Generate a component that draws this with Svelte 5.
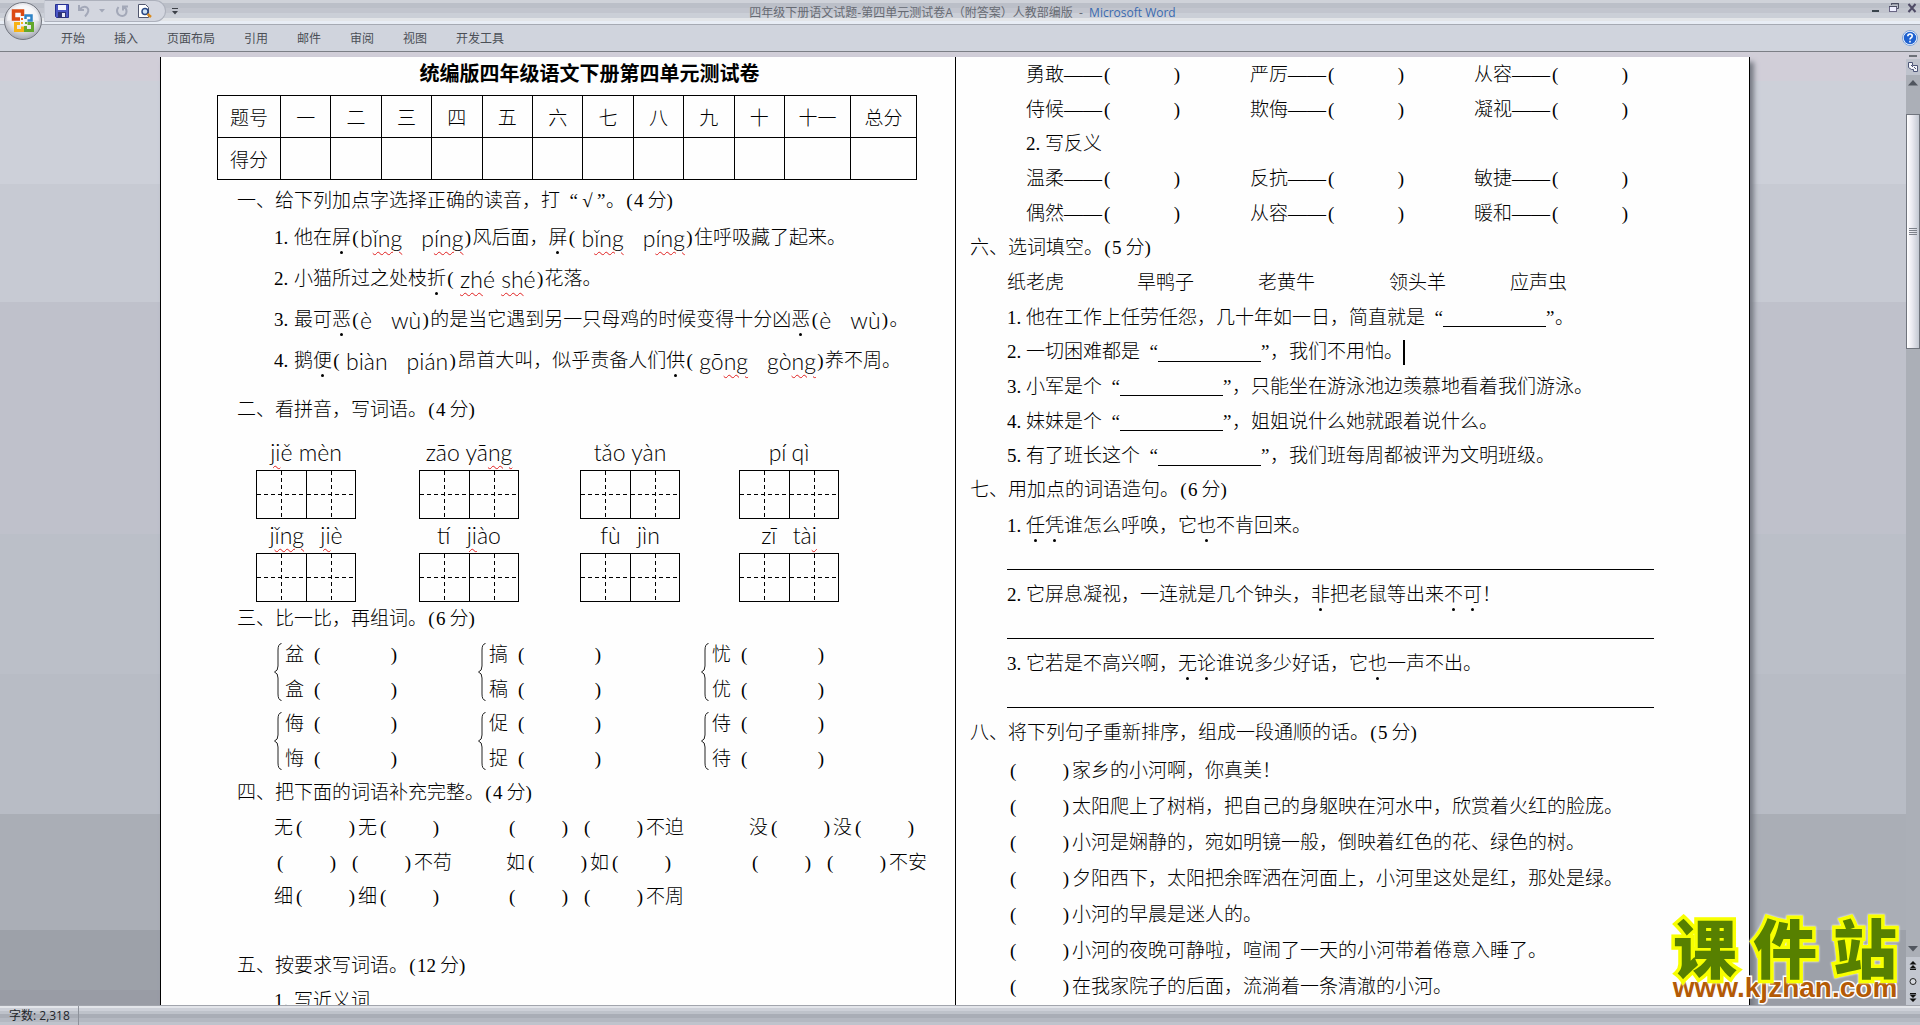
<script>
  const tabs = ['开始', '插入', '页面布局', '引用', '邮件', '审阅', '视图', '开发工具'];
  const numerals = ['一', '二', '三', '四', '五', '六', '七', '八', '九', '十', '十一', '总分'];

  // Markup: {pinyin} with ~misspelt~ parts, *dotted character, _ blank line,
  // [ ] answer bracket, ; wide gap, ' thin gap, | text caret
  const readings = [
    "1.他在*屏({b~ǐng~};{p~íng~})风后面，*屏('{b~ǐng~};{p~íng~})住呼吸藏了起来。",
    "2.小猫所过之处枝*折('{~zh~é ~sh~é})花落。",
    '3.最可*恶({è};{wù})的是当它遇到另一只母鸡的时候变得十分凶*恶({è};{wù})。',
    "4.鹅*便('{biàn};{pián})昂首大叫，似乎责备人们*供('{gō~ng~};{gò~ng~})养不周。"
  ];
  const grids = [
    ['{~ji~ě mèn}', '{zāo yā~ng~}', '{tǎo yàn}', "{pí}'{qì}"],
    ["{j~ǐng~}'{ }'{~ji~è}", "{tí}'{ }'{~ji~ào}", "{fù}'{ }'{jìn}", "{zī}'{ }'{tà~i~}"]
  ];
  const pairs = [
    [['盆', '盒'], ['搞', '稿'], ['忧', '优']],
    [['侮', '悔'], ['促', '捉'], ['侍', '待']]
  ];
  const idioms = [
    ['无[]无[]', '[]\'\'[]不迫', '没[]没[]'],
    ['[]\'\'[]不苟', '如[]如[]', '[]\'\'[]不安'],
    ['细[]细[]', '[]\'\'[]不周', '']
  ];
  const synonyms = [['勇敢', '严厉', '从容'], ['侍候', '欺侮', '凝视']];
  const antonyms = [['温柔', '反抗', '敏捷'], ['偶然', '从容', '暖和']];
  const words = ['纸老虎', '旱鸭子', '老黄牛', '领头羊', '应声虫'];
  const fills = [
    '1.他在工作上任劳任怨，几十年如一日，简直就是“_”。',
    '2.一切困难都是“_”，我们不用怕。|',
    '3.小军是个“_”，只能坐在游泳池边羡慕地看着我们游泳。',
    '4.妹妹是个“_”，姐姐说什么她就跟着说什么。',
    '5.有了班长这个“_”，我们班每周都被评为文明班级。'
  ];
  const sentences = [
    '1.*任*凭谁怎么呼唤，它*也不肯回来。',
    '2.它屏息凝视，一连就是几个钟头，*非把老鼠等出来*不*可！',
    '3.它若是不高兴啊，*无*论谁说多少好话，它*也一声不出。'
  ];
  const order = [
    '家乡的小河啊，你真美！',
    '太阳爬上了树梢，把自己的身躯映在河水中，欣赏着火红的脸庞。',
    '小河是娴静的，宛如明镜一般，倒映着红色的花、绿色的树。',
    '夕阳西下，太阳把余晖洒在河面上，小河里这处是红，那处是绿。',
    '小河的早晨是迷人的。',
    '小河的夜晚可静啦，喧闹了一天的小河带着倦意入睡了。',
    '在我家院子的后面，流淌着一条清澈的小河。'
  ];

  const kinds = { '(': 'paren', ')': 'paren', '“': 'open', '”': 'close' };

  function parse(text) {
    const parts = text.match(/\{[^}]*\}|^\d\.|\*.|\[\]|[()“”_;'|]|[^{*[()“”_;'|]+/g) ?? [];
    return parts.map((p) => {
      if (p[0] === '{') return { kind: 'pinyin', runs: p.slice(1, -1).split('~') };
      if (/^\d\.$/.test(p)) return { kind: 'number', text: p };
      if (p[0] === '*') return { kind: 'dotted', text: p[1] };
      if (p === '[]') return { kind: 'bracket' };
      if (p === '_') return { kind: 'blank' };
      if (p === ';') return { kind: 'wide' };
      if (p === "'") return { kind: 'thin' };
      if (p === '|') return { kind: 'caret' };
      return { kind: kinds[p] ?? 'text', text: p };
    });
  }
</script>

{#snippet rich(text)}
  {#each parse(text) as t}{#if t.kind === 'pinyin'}<span class="pinyin">{#each t.runs as run, i}{#if i % 2}<span class="wavy">{run}</span>{:else}{run}{/if}{/each}</span>{:else if t.kind === 'bracket'}<span class="bracket"><span>(</span><span>)</span></span>{:else if t.kind === 'text'}<span>{t.text}</span>{:else}<span class={t.kind}>{t.text ?? ''}</span>{/if}{/each}
{/snippet}

{#snippet heading(text, points)}
  <h2 class="row heading"><span>{text}</span><span class="paren">(</span><span class="points">{points}</span><span>分</span><span>)</span></h2>
{/snippet}

{#snippet opposites(list)}
  {#each list as line}
    <div class="row opposites">
      {#each line as word}
        <div class="row"><span>{word}——</span><span class="bracket long"><span>(</span><span>)</span></span></div>
      {/each}
    </div>
  {/each}
{/snippet}

<div class="app">
  <header class="titlebar">
    <button class="orb" aria-label="Office 按钮">
      <svg viewBox="0 0 40 40" width="40" height="40">
        <defs>
          <radialGradient id="orb" cx="50%" cy="35%" r="65%">
            <stop offset="0" stop-color="#fff" />
            <stop offset=".6" stop-color="#e4e5ea" />
            <stop offset="1" stop-color="#a3a6b0" />
          </radialGradient>
        </defs>
        <circle cx="20" cy="20" r="18.5" fill="url(#orb)" stroke="#72767f" />
        <path d="M4 20a16 16 0 0 1 32 0q-16-5-32 0z" fill="#fff" opacity=".5" />
        <g fill="none" stroke-width="3.500">
          <path d="M17 18h-6.500v-8h9v5" stroke="#dc4a12" />
          <path d="M22.500 18v-3.500h6v5h-4" stroke="#2f84c6" stroke-width="2.500" />
          <path d="M17 22.500h-4.500v7h7v-4" stroke="#f7b316" stroke-width="3" />
          <path d="M22.500 25v4.500h7v-7h-5" stroke="#63a72c" stroke-width="3" />
        </g>
        <g fill="#e8651b"><rect x="18" y="17" width="2" height="2" /><rect x="18" y="21" width="2" height="2" fill="#f7b316" /><rect x="22" y="21" width="2" height="2" fill="#63a72c" /></g>
      </svg>
    </button>
    <div class="quick">
      <button aria-label="保存">
        <svg viewBox="0 0 14 14" width="14" height="14"><path d="M.5.500h13v13h-12l-1-1z" fill="#4a55c4" stroke="#27318f" /><rect x="3" y="1" width="8" height="5" fill="#f2f4fc" /><rect x="3" y="8" width="8" height="6" fill="#2c3278" /><rect x="7" y="9" width="3" height="4" fill="#e8eaf6" /></svg>
      </button>
      <button aria-label="撤消">
        <svg viewBox="0 0 14 14" width="14" height="14" fill="none" stroke="#a3a8b8" stroke-width="2"><path d="M2 1v5h5M2.500 5.500q4-4 7.500-2 3.500 3-2 9" /></svg>
      </button>
      <button class="tiny" aria-label="撤消列表"><svg viewBox="0 0 6 4" width="6" height="4"><path d="M0 0h6L3 3.500z" fill="#a3a8b8" /></svg></button>
      <button aria-label="重复">
        <svg viewBox="0 0 14 14" width="14" height="14" fill="none" stroke="#a3a8b8" stroke-width="2"><path d="M3.500 3q-3 4 0 7.500 4 3 7 0 2.500-4-1-7.500M8 6.500V2.500h5" /></svg>
      </button>
      <button aria-label="打印预览">
        <svg viewBox="0 0 16 14" width="16" height="14"><path d="M1.500.5h7l3 3v10h-10z" fill="#fff" stroke="#50566e" /><circle cx="8" cy="7.500" r="3" fill="#cfe3f7" stroke="#2c4a86" stroke-width="1.500" /><path d="M10.500 10l3.500 3" stroke="#d98a1e" stroke-width="2.500" /></svg>
      </button>
    </div>
    <button class="customise" aria-label="自定义快速访问工具栏"><svg viewBox="0 0 6 7" width="6" height="7"><path d="M0 0h6v1H0zM0 3h6L3 6.500z" fill="#3d4148" /></svg></button>
    <h1 class="caption">四年级下册语文试题-第四单元测试卷A（附答案）人教部编版&nbsp; -&nbsp; <span>Microsoft Word</span></h1>
    <div class="window">
      <button aria-label="最小化"><svg viewBox="0 0 10 10" width="10" height="10"><path d="M1 7h7v2H1z" fill="#3a444c" /></svg></button>
      <button aria-label="还原"><svg viewBox="0 0 10 10" width="10" height="10"><path d="M2.500 2V.5h7v5H8M2 .8h8" fill="none" stroke="#4c4f63" /><rect x=".5" y="3.500" width="7" height="5" fill="#eef" stroke="#6a6684" /><path d="M0 3.500h8" stroke="#4c4f63" /></svg></button>
      <button aria-label="关闭"><svg viewBox="0 0 10 10" width="10" height="10"><path d="M1.500 1l7 8M8.500 1l-7 8" stroke="#4f4b66" stroke-width="2" /></svg></button>
    </div>
  </header>

  <nav class="tabs">
    {#each tabs as tab}<button>{tab}</button>{/each}
    <button class="help" aria-label="帮助"><svg viewBox="0 0 16 16" width="16" height="16"><circle cx="8" cy="8" r="7" fill="#1f62d0" stroke="#f2f7ff" stroke-width="1.500" /><circle cx="8" cy="8" r="7.500" fill="none" stroke="#5f8ccb" stroke-width=".8" /><path d="M5.800 6.300q0-2.300 2.200-2.300t2.200 2q0 1.200-1.400 2-.8.500-.8 1.500M8 10.800v1.700" fill="none" stroke="#fff" stroke-width="1.600" /></svg></button>
  </nav>

  <main class="workspace">
    <div class="canvas">
      <article class="page">
        <section class="column left">
          <h2 class="title">统编版四年级语文下册第四单元测试卷</h2>
          <table>
            <colgroup><col class="first" />{#each numerals as n}<col class:last={n.length > 1} />{/each}</colgroup>
            <tbody>
              <tr><th>题号</th>{#each numerals as n}<th>{n}</th>{/each}</tr>
              <tr><th>得分</th>{#each numerals as n}<td></td>{/each}</tr>
            </tbody>
          </table>
          <div class="readings">
            <h2 class="row heading"><span>一、给下列加点字选择正确的读音，打</span><span class="open">“</span><span class="tick">√</span><span class="close">”</span><span>。</span><span class="paren">(</span><span class="points">4</span><span>分</span><span>)</span></h2>
            {#each readings as line}<div class="row item">{@render rich(line)}</div>{/each}
          </div>
          {@render heading('二、看拼音，写词语。', '4')}
          <div class="write">
            {#each grids as line}
              {#each line as p}
                <div class="word">
                  <div class="row">{@render rich(p)}</div>
                  <div class="boxes"><i></i><i></i></div>
                </div>
              {/each}
            {/each}
          </div>
          <div class="flow">
            {@render heading('三、比一比，再组词。', '6')}
            {#each pairs as line}
              <div class="pairs">
                {#each line as pair}
                  <div class="pair">
                    <svg viewBox="0 0 8 58" width="8" height="58"><path d="M7.500.5Q4 1 4 7v16q0 5-3.500 6 3.500 1 3.500 6v16q0 6 3.500 6.500" fill="none" stroke="#222" /></svg>
                    <div>
                      {#each pair as c}<div class="row"><span>{c}</span><span class="bracket far"><span>(</span><span>)</span></span></div>{/each}
                    </div>
                  </div>
                {/each}
              </div>
            {/each}
            {@render heading('四、把下面的词语补充完整。', '4')}
            {#each idioms as line}
              <div class="row idioms">{#each line as part}<div class="row">{@render rich(part)}</div>{/each}</div>
            {/each}
            <div class="row"></div>
            {@render heading('五、按要求写词语。', '12')}
            <div class="row item">{@render rich('1.写近义词')}</div>
          </div>
        </section>

        <section class="column right">
          <div class="flow">
            {@render opposites(synonyms)}
            <div class="row sub">{@render rich('2.写反义')}</div>
            {@render opposites(antonyms)}
            {@render heading('六、选词填空。', '5')}
            <div class="row words">{#each words as w}<span>{w}</span>{/each}</div>
            {#each fills as line}<div class="row item">{@render rich(line)}</div>{/each}
            {@render heading('七、用加点的词语造句。', '6')}
            {#each sentences as line}
              <div class="row item">{@render rich(line)}</div>
              <div class="answer"></div>
            {/each}
            {@render heading('八、将下列句子重新排序，组成一段通顺的话。', '5')}
          </div>
          <div class="order">
            {#each order as line}<div class="row item"><span class="bracket"><span>(</span><span>)</span></span><span>{line}</span></div>{/each}
          </div>
        </section>
      </article>
      <aside class="watermark">
        <div class="brand"><span>课</span><span>件</span><span>站</span></div>
        <a href="http://www.kjzhan.com">www.kjzhan.com</a>
      </aside>
    </div>
    <div class="scroll">
      <i class="split"></i>
      <button class="ruler" aria-label="标尺"><svg viewBox="0 0 12 12" width="12" height="12"><path d="M1.500 1.500h4v3h5v6h-4v-2h-2l-3-2z" fill="#f4f5fa" stroke="#4e5678" /><path d="M4 4l2 2m1 0l2 2" stroke="#4e5678" /></svg></button>
      <button class="arrow" aria-label="向上"><svg viewBox="0 0 10 6" width="10" height="6"><path d="M0 5.500h10L5 0z" fill="#51565f" /></svg></button>
      <div class="track"><div class="thumb"><i></i></div></div>
      <button class="arrow down" aria-label="向下"><svg viewBox="0 0 10 6" width="10" height="6"><path d="M0 0h10L5 5.500z" fill="#51565f" /></svg></button>
      <button class="jump" aria-label="前一页"><svg viewBox="0 0 8 9" width="8" height="9"><path d="M4 0l3.500 3.500h-7zM4 4l3.500 3.500h-7zM1 8h6v1H1z" fill="#111" /></svg></button>
      <button class="jump" aria-label="选择浏览对象"><svg viewBox="0 0 8 9" width="8" height="9"><circle cx="4" cy="4.500" r="3" fill="#d5d8df" stroke="#222" /></svg></button>
      <button class="jump" aria-label="下一页"><svg viewBox="0 0 8 9" width="8" height="9"><path d="M1 0h6v1H1zM4 5L.5 1.500h7zM4 9L.5 5.500h7z" fill="#111" /></svg></button>
    </div>
  </main>

  <footer class="status"><span>字数: 2,318</span></footer>
</div>

<style>
  :global(body) {
    margin: 0;
    overflow: hidden;
  }
  .app {
    display: flex;
    flex-direction: column;
    height: 100vh;
    font: 12px 'Open Sans', 'Noto Sans CJK SC', sans-serif;
    color: #4b4f56;
  }
  button {
    display: flex;
    align-items: center;
    justify-content: center;
    padding: 0;
    border: 0;
    background: none;
    font: inherit;
    color: inherit;
  }
  svg {
    display: block;
  }
  .titlebar {
    display: flex;
    align-items: flex-start;
    height: 24px;
    border-bottom: 1px solid #a6aab3;
    background: linear-gradient(#cfd2d9 0 3px, #bbbfc8 3px 8px, #c2c5ce 8px 13px, #cbcfd7 13px 18px, #e3e5e8 18px 21px, #e8edf5 21px);
  }
  .orb {
    position: relative;
    z-index: 1;
    width: 44px;
    height: 42px;
    padding-left: 2px;
  }
  .quick {
    display: flex;
    align-items: center;
    gap: 8px;
    box-sizing: border-box;
    height: 22px;
    padding: 0 12px 0 10px;
    border: 1px solid #adb1bc;
    border-left-color: #c8ccd5;
    border-radius: 0 11px 11px 0;
    background: #d3d6df;
  }
  .tiny {
    margin-right: 2px;
  }
  .customise {
    width: 18px;
    height: 22px;
  }
  .caption {
    flex: 1;
    margin: 0;
    font-size: 12px;
    font-weight: 400;
    line-height: 25px;
    text-align: center;
    color: #666a72;
  }
  .caption span {
    color: #3a6ab0;
  }
  .window {
    display: flex;
    gap: 8px;
    width: 176px;
    justify-content: flex-end;
    padding: 3px 3px 0 0;
  }
  .tabs {
    display: flex;
    align-items: center;
    gap: 29px;
    height: 26px;
    padding: 0 2px 0 61px;
    border-bottom: 1px solid #7c7f86;
    background: #d0d4dd;
  }
  .help {
    margin-left: auto;
  }
  .workspace {
    display: flex;
    flex: 1;
    min-height: 0;
    background: linear-gradient(#d1ced8 0 29px, #cdd0d9 29px 132px, #c7cad3 132px 250px, #bfc1cb 250px 482px, #bbbfc8 482px 622px, #b8bcc5 622px 762px, #aaaeb6 762px 878px, #9da1a9 878px 938px, #999ca5 938px);
  }
  .canvas {
    position: relative;
    display: flex;
    flex: 1;
    padding: 5px 156px 0 160px;
    overflow: hidden;
  }
  .page {
    display: grid;
    flex: 1;
    grid-template-columns: 1fr 1fr;
    border: solid #000;
    border-width: 0 1px;
    background: #fefefe;
    box-shadow: 4px 5px 5px #777b84;
    font: 300 19px 'Liberation Serif', 'Noto Sans CJK SC', serif;
    color: #000;
  }
  .column {
    min-width: 0;
    white-space: nowrap;
  }
  .right {
    border-left: 1px solid #000;
  }
  .title {
    height: 35px;
    margin: 0;
    padding-left: 63px;
    font-size: 20px;
    font-weight: 700;
    line-height: 35px;
    text-align: center;
  }
  table {
    width: 700px;
    margin: 3px 0 4px 56px;
    border-collapse: collapse;
    table-layout: fixed;
  }
  .first {
    width: 63px;
  }
  .last {
    width: 66px;
  }
  th,
  td {
    height: 41px;
    padding: 0;
    border: 1px solid #000;
    font-weight: 300;
  }
  .row {
    display: flex;
    align-items: center;
    line-height: 24px;
  }
  .heading {
    height: 34px;
    margin: 0;
    padding-left: 76px;
    font-size: 19px;
    font-weight: 300;
  }
  .right .heading {
    padding-left: 14px;
  }
  .item {
    padding-left: 113px;
  }
  .right .item {
    padding-left: 51px;
  }
  .readings {
    display: grid;
    grid-template-rows: 33px repeat(4, 41px);
    margin-bottom: 12px;
  }
  .paren,
  .close {
    width: 9px;
  }
  .paren {
    text-align: center;
  }
  .points {
    padding-right: 4px;
  }
  .open {
    width: 18px;
    text-align: right;
  }
  .tick {
    width: 19px;
    text-align: center;
  }
  .number {
    width: 19px;
  }
  .left .number {
    width: 20px;
  }
  .wide {
    width: 19px;
  }
  .thin {
    width: 5px;
  }
  .dotted {
    position: relative;
  }
  .dotted::after {
    content: '';
    position: absolute;
    top: 25px;
    left: 8px;
    width: 3px;
    height: 3px;
    border-radius: 50%;
    background: #000;
  }
  .caret {
    width: 2px;
    height: 25px;
    background: #000;
  }
  .blank {
    align-self: center;
    width: 103px;
    height: 18px;
    border-bottom: 1px solid #000;
  }
  .bracket {
    display: flex;
    justify-content: space-between;
    box-sizing: border-box;
    width: 65px;
    padding: 0 3px;
  }
  .long {
    width: 80px;
    padding: 0 2px;
  }
  .far {
    width: 98px;
    padding: 0 5px 0 10px;
  }
  .pinyin {
    font-family: Lato, 'Noto Sans', sans-serif;
    font-size: 23px;
    font-weight: 300;
    white-space: pre;
  }
  .wavy {
    text-decoration: underline wavy #e02020 1px;
    text-underline-offset: 4px;
  }
  .write {
    display: grid;
    grid-template-columns: 163px 161px 159px 100px;
    padding: 9px 0 0 95px;
  }
  .word {
    width: 100px;
  }
  .word .row {
    justify-content: center;
    height: 31px;
    padding-bottom: 3px;
  }
  .boxes {
    display: grid;
    grid-template-columns: 1fr 1fr;
    box-sizing: border-box;
    height: 49px;
    border: 1px solid #000;
  }
  .boxes i {
    background:
      repeating-linear-gradient(90deg, #000 0 4px, transparent 4px 7px) 0 50% / 100% 1px no-repeat,
      repeating-linear-gradient(#000 0 4px, transparent 4px 7px) 50% 0 / 1px 100% no-repeat;
  }
  .boxes i + i {
    border-left: 1px solid #000;
  }
  .flow {
    display: grid;
    grid-auto-rows: 35px 35px 34px;
  }
  .pairs {
    display: grid;
    grid-row: span 2;
    grid-template-columns: 204px 223px 140px;
    align-items: center;
    padding-left: 113px;
  }
  .pair {
    display: flex;
    align-items: center;
    gap: 3px;
  }
  .pair .row {
    height: 35px;
  }
  .idioms {
    display: grid;
    grid-template-columns: 232px 243px 1fr;
    padding-left: 113px;
  }
  .opposites {
    display: grid;
    grid-template-columns: 224px 224px 1fr;
    padding-left: 70px;
  }
  .sub {
    padding-left: 70px;
  }
  .words {
    display: grid;
    grid-template-columns: 130px 121px 131px 121px 1fr;
    padding-left: 51px;
  }
  .answer {
    width: 647px;
    height: 26px;
    margin-left: 51px;
    border-bottom: 1px solid #000;
  }
  .order {
    display: grid;
    grid-auto-rows: 36px;
    padding-top: 2px;
  }
  .watermark {
    position: absolute;
    right: 6px;
    bottom: 0;
    display: flex;
    flex-direction: column;
    align-items: stretch;
    width: 230px;
  }
  .brand {
    display: flex;
    justify-content: space-between;
    padding: 0 3px;
    font: 900 64px/52px 'Noto Sans CJK SC', sans-serif;
    color: #578000;
    -webkit-text-stroke: 7px #f8ff00;
    paint-order: stroke fill;
    filter: drop-shadow(0 0 1px #fff);
  }
  .watermark a {
    font: 700 28px/34px 'Liberation Sans', sans-serif;
    text-align: center;
    text-decoration: none;
    color: #b35a06;
    -webkit-text-stroke: 3px #fff;
    paint-order: stroke fill;
  }
  .scroll {
    display: flex;
    flex-direction: column;
    align-items: stretch;
    width: 14px;
    background: #abafb7;
  }
  .split {
    height: 2px;
    padding: 0;
    border: solid #d0ced8;
    border-width: 3px 3px 2px;
    background: #6d7078;
  }
  .ruler {
    height: 16px;
    background: #bfc3cd;
  }
  .arrow {
    height: 16px;
  }
  .track {
    flex: 1;
    padding-top: 23px;
  }
  .thumb {
    display: flex;
    align-items: center;
    justify-content: center;
    box-sizing: border-box;
    height: 235px;
    border: 1px solid #70747d;
    background: linear-gradient(90deg, #fff, #ecebf2 40%, #c3c8d2);
  }
  .thumb i {
    width: 8px;
    height: 7px;
    background: repeating-linear-gradient(#7d818a 0 1px, transparent 1px 2px);
  }
  .jump {
    height: 16px;
    background: #c3c7d0;
  }
  .status {
    display: flex;
    align-items: center;
    height: 19px;
    border-top: 1px solid #a2a5ad;
    background: linear-gradient(#e3e5ea 0 2px, #cdd0d8 2px 5px, #bec2ca 5px 8px, #a9adb6 8px 12px, #b4b8c1 12px 16px, #bfc3cc 16px);
    color: #22252a;
  }
  .status span {
    padding: 0 8px 0 9px;
    border-right: 1px solid #8d919a;
    line-height: 19px;
  }
</style>
